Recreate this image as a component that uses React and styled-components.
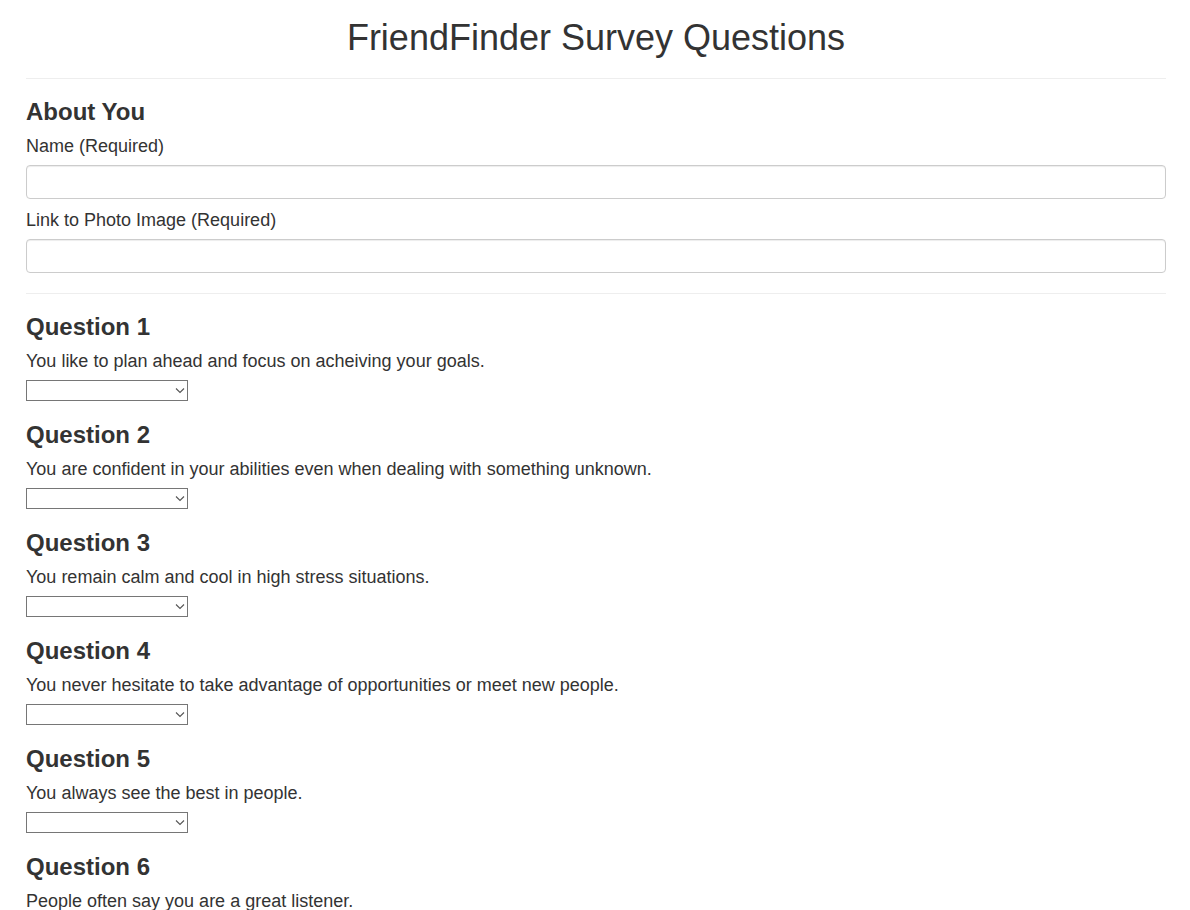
import React from 'react';
import styled, { createGlobalStyle } from 'styled-components';

const GlobalStyle = createGlobalStyle`
  * {
    box-sizing: border-box;
  }

  body {
    margin: 0;
    background: #fff;
    color: #333;
    font-family: "Liberation Sans", Arial, sans-serif;
    font-size: 18px;
  }
`;

const Page = styled.div`
  padding: 0 24px 0 26px;
`;

const Title = styled.h1`
  margin: 18px 0 0;
  font-size: 36px;
  line-height: 39.6px;
  font-weight: 400;
  text-align: center;
  color: #333;
`;

const Divider = styled.div`
  height: 1px;
  background: #eee;
  margin: ${props => props.$top}px 0 20px;
`;

const SectionTitle = styled.h3`
  margin: 0 0 9px;
  font-size: 24px;
  line-height: 26px;
  font-weight: 700;
  color: #333;
`;

const FieldLabel = styled.label`
  display: block;
  font-size: 18px;
  line-height: 24px;
  margin-bottom: 7px;
`;

const TextInput = styled.input`
  display: block;
  width: 100%;
  height: 34px;
  margin: 0 0 9px;
  padding: 6px 12px;
  font-family: inherit;
  font-size: 14px;
  color: #555;
  background: #fff;
  border: 1px solid #ccc;
  border-radius: 4px;
  box-shadow: inset 0 1px 1px rgba(0, 0, 0, 0.075);
  outline: none;

  &:last-child {
    margin-bottom: 0;
  }
`;

const Question = styled.div`
  margin-bottom: 21px;
`;

const QuestionText = styled.p`
  margin: 0 0 7px;
  font-size: 18px;
  line-height: 24px;
`;

const SelectWrap = styled.div`
  position: relative;
  width: 162px;
  height: 21px;

  svg {
    position: absolute;
    top: 8px;
    right: 3px;
    pointer-events: none;
  }
`;

const Answer = styled.select`
  display: block;
  width: 100%;
  height: 100%;
  margin: 0;
  padding: 0 20px 0 3px;
  appearance: none;
  font-family: Arial, "Liberation Sans", sans-serif;
  font-size: 13px;
  color: #000;
  background: #fff;
  border: 1px solid #767676;
  border-radius: 0;
`;

const questions = [
  'You like to plan ahead and focus on acheiving your goals.',
  'You are confident in your abilities even when dealing with something unknown.',
  'You remain calm and cool in high stress situations.',
  'You never hesitate to take advantage of opportunities or meet new people.',
  'You always see the best in people.',
  'People often say you are a great listener.',
  'You enjoy trying new things and going on adventures.',
  'You would rather spend a quiet evening at home than go to a party.',
  'You find it easy to express your feelings to others.',
  'You believe that hard work always pays off in the end.',
];

const choices = [
  '',
  '1 (Strongly Disagree)',
  '2',
  '3',
  '4',
  '5 (Strongly Agree)',
];

const Chevron = () => (
  <svg width="10" height="6" viewBox="0 0 10 6">
    <path d="M1 0.5 L5 4.5 L9 0.5" fill="none" stroke="#555" strokeWidth="1.1" />
  </svg>
);

const App = () => {
  return (
    <>
      <GlobalStyle />
      <Page>
        <Title>FriendFinder Survey Questions</Title>
        <Divider $top={20} />

        {/* 기본 정보 */}
        <section>
          <SectionTitle>About You</SectionTitle>
          <FieldLabel htmlFor="name">Name (Required)</FieldLabel>
          <TextInput id="name" type="text" />
          <FieldLabel htmlFor="photo">Link to Photo Image (Required)</FieldLabel>
          <TextInput id="photo" type="text" />
        </section>

        <Divider $top={20} />

        {/* 질문 목록 */}
        {questions.map((text, i) => (
          <Question key={i}>
            <SectionTitle>Question {i + 1}</SectionTitle>
            <QuestionText>{text}</QuestionText>
            <SelectWrap>
              <Answer defaultValue="">
                {choices.map(c => (
                  <option key={c} value={c}>{c}</option>
                ))}
              </Answer>
              <Chevron />
            </SelectWrap>
          </Question>
        ))}
      </Page>
    </>
  );
};

export default App;
